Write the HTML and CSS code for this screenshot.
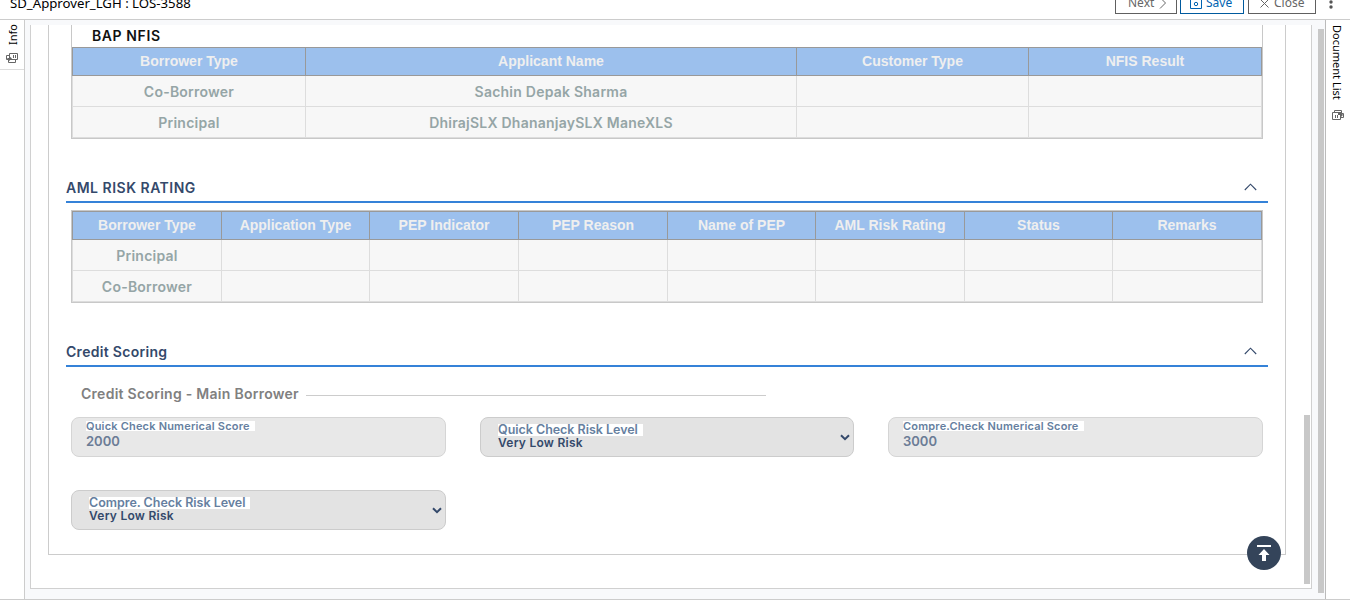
FILE: index.html
```html
<!DOCTYPE html>
<html lang="en">
<head>
<meta charset="utf-8">
<title>SD_Approver_LGH : LOS-3588</title>
<link rel="stylesheet" href="styles.css">
</head>
<body>
<header class="topbar">
  <h1 class="title">SD_Approver_LGH : LOS-3588</h1>
  <div class="actions">
    <button class="btn next">Next<svg width="8" height="12" viewBox="0 0 8 12"><path d="M1 .5 6.500 6 1 11.500"/></svg></button>
    <button class="btn save"><svg width="12" height="12" viewBox="0 0 12 12"><path d="M.5.5h11v11H.5zM3.500 0v2.500h5V0"/><circle cx="6" cy="7" r="1.700"/></svg>Save</button>
    <button class="btn close"><svg width="9" height="9" viewBox="0 0 9 9"><path d="M.5.5l8 8M8.500.5l-8 8"/></svg>Close</button>
    <svg class="dots" width="4" height="14" viewBox="0 0 4 14"><circle cx="2" cy="2" r="1.700"/><circle cx="2" cy="7" r="1.700"/><circle cx="2" cy="12" r="1.700"/></svg>
  </div>
</header>
<div class="workspace">
  <aside class="rail left">
    <div class="tab">
      <span class="vtext up">Info</span>
      <svg class="docs" width="12" height="10" viewBox="0 0 12 10"><path d="M3.500.5h8v6h-8zM3 2.500H.5v4H2M2.500 7v2.500h7V7M7.500 2v3M9.500 2v3"/><path class="fill" d="M1 5h2V3l3 2.500L3 8z"/></svg>
    </div>
  </aside>
  <main class="stage">
    <div class="frame">
      <div class="panel">
        <div class="bap">
          <h2 class="bap-title">BAP NFIS</h2>
          <div class="grid nfis">
            <div class="th"><span>Borrower Type</span></div><div class="th"><span>Applicant Name</span></div><div class="th"><span>Customer Type</span></div><div class="th"><span>NFIS Result</span></div>
            <div class="td"><span>Co-Borrower</span></div><div class="td"><span>Sachin Depak Sharma</span></div><div class="td"></div><div class="td"></div>
            <div class="td"><span>Principal</span></div><div class="td"><span>DhirajSLX DhananjaySLX ManeXLS</span></div><div class="td"></div><div class="td"></div>
          </div>
        </div>
        <div class="section aml-head"><h3 class="caps">AML RISK RATING</h3><svg width="13" height="8" viewBox="0 0 13 8"><path d="M.8 7 6.500 1.200 12.200 7"/></svg></div>
        <div class="box">
          <div class="grid aml">
            <div class="th"><span>Borrower Type</span></div><div class="th"><span>Application Type</span></div><div class="th"><span>PEP Indicator</span></div><div class="th"><span>PEP Reason</span></div><div class="th"><span>Name of PEP</span></div><div class="th"><span>AML Risk Rating</span></div><div class="th"><span>Status</span></div><div class="th"><span>Remarks</span></div>
            <div class="td"><span>Principal</span></div><div class="td"></div><div class="td"></div><div class="td"></div><div class="td"></div><div class="td"></div><div class="td"></div><div class="td"></div>
            <div class="td"><span>Co-Borrower</span></div><div class="td"></div><div class="td"></div><div class="td"></div><div class="td"></div><div class="td"></div><div class="td"></div><div class="td"></div>
          </div>
        </div>
        <div class="section credit-head"><h3>Credit Scoring</h3><svg width="13" height="8" viewBox="0 0 13 8"><path d="M.8 7 6.500 1.200 12.200 7"/></svg></div>
        <div class="legend"><h4>Credit Scoring - Main Borrower</h4></div>
        <div class="fields">
          <div class="field input"><label>Quick Check Numerical Score</label><span class="value">2000</span></div>
          <div class="field select"><label>Quick Check Risk Level</label><span class="value">Very Low Risk</span><svg width="10" height="7" viewBox="0 0 10 7"><path d="M1 1.200 5 5.200 9 1.200"/></svg></div>
          <div class="field input"><label>Compre.Check Numerical Score</label><span class="value">3000</span></div>
          <div class="field select"><label>Compre. Check Risk Level</label><span class="value">Very Low Risk</span><svg width="10" height="7" viewBox="0 0 10 7"><path d="M1 1.200 5 5.200 9 1.200"/></svg></div>
        </div>
        <button class="to-top" aria-label="Back to top"><svg width="14" height="16" viewBox="0 0 14 16"><path d="M0 0h14v2H0zM7 4l5.500 6H9v6H5v-6H1.500z"/></svg></button>
      </div>
      <div class="thumb inner"></div>
    </div>
    <div class="thumb outer"></div>
  </main>
  <aside class="rail right">
    <span class="vtext">Document List</span>
    <svg class="docs" width="12" height="10" viewBox="0 0 12 10"><path d="M.5 2.500h8v7h-8zM2.500 2V.5h7V3M9.500 3.500h2v4H9M3.500 5v3M5.500 5v3"/><path class="fill" d="M6 2h3l2 3-2 2V5H6z"/></svg>
  </aside>
</div>
</body>
</html>
```
FILE: styles.css
```css
* { box-sizing: border-box; }
body { margin: 0; height: 615px; overflow: hidden; background: #fff; font-family: Inter, sans-serif; }
h1, h2, h3, h4 { margin: 0; }
button { margin: 0; font: inherit; }
svg { display: block; flex: none; fill: none; }

.topbar { height: 20px; border-bottom: 1px solid #ccc; overflow: hidden; display: flex; justify-content: space-between; align-items: flex-end; padding: 0 16px 5px 10px; }
.title { font: 400 13.2px/20px "Noto Sans", sans-serif; color: #000; margin-bottom: 1px; white-space: nowrap; }
.actions { display: flex; align-items: flex-end; }
.btn { height: 24px; border: 1px solid #606060; background: #fff; color: #666; font: 400 12px/20px "Noto Sans", sans-serif; display: flex; align-items: center; padding: 2px 0 0; }
.btn svg { stroke: currentColor; }
.next { width: 62px; padding-left: 12px; gap: 5px; margin-right: 3px; }
.save { width: 64px; padding-left: 9px; gap: 4px; margin-right: 4px; color: #0063b1; border-color: #005a9e; }
.close { width: 68px; padding-left: 11px; gap: 5px; }
.dots { fill: #555; margin: 0 1px 5px 13px; }

.workspace { display: flex; height: 580px; border-bottom: 1px solid #ccc; }
.rail { width: 25px; flex: none; background: #fff; }
.left { border-right: 1px solid #ccc; }
.right { border-left: 1px solid #bbb; display: flex; flex-direction: column; align-items: flex-start; padding: 5px 0 0 2px; }
.tab { height: 50px; border-bottom: 1px solid #ddd; display: flex; flex-direction: column; padding: 5px 0 0 4px; }
.vtext { writing-mode: vertical-rl; font: 400 11px/18px "Noto Sans", sans-serif; color: #000; white-space: nowrap; }
.up { transform: rotate(180deg); height: 20px; width: 18px; }
.docs { stroke: #666; margin: 8px 0 0 2px; }
.docs .fill { fill: #666; stroke: none; }
.right .docs { margin: 10px 0 0 4px; }

.stage { flex: 1; min-width: 0; background: #f8f9fb; display: flex; padding: 5px 1px 0 5px; }
.frame { width: 1282px; height: 564px; border: 1px solid #d0d0d0; border-top: 0; background: #fff; display: flex; padding-left: 17px; }
.thumb { width: 6px; background: #c8c8c8; flex: none; }
.inner { margin: 390px 0 0 18px; height: 169px; width: 6px; }
.outer { margin: 4px 0 0 6px; height: 564px; width: 6px; }
.panel { position: relative; width: 1238px; height: 530px; border: 1px solid #ccc; border-top: 0; padding: 0 17px; flex: none; }

.bap, .box { width: 1192px; margin-left: 5px; border: 1px solid #c8c8c8; }
.bap { border-top: 0; }
.bap-title { height: 22px; padding-left: 20px; font-size: 14px; line-height: 22px; font-weight: 600; letter-spacing: .6px; color: #111; }
.grid { display: grid; grid-template-rows: 29px 31px 31px; text-align: center; }
.nfis { grid-template-columns: 234px 491px 232px 233px; }
.aml { grid-template-columns: 150px 148px 149px 149px 148px 149px 148px 149px; }
.th, .td { display: flex; justify-content: center; align-items: center; white-space: nowrap; }
.th { background: #9cc0ed; border: solid #999; border-width: 1px 1px 1px 0; color: #efefef; font: 700 14px/16px "Liberation Sans", sans-serif; padding-bottom: 1px; }
.td { background: #f7f7f7; border: solid #ddd; border-width: 0 1px 1px 0; color: #95a5a6; font-size: 14px; font-weight: 600; line-height: 18px; letter-spacing: .23px; padding-top: 2px; }
.nfis > :nth-child(4n+1), .aml > :nth-child(8n+1) { border-left-width: 1px; }

.section { height: 30px; width: 1202px; border-bottom: 2px solid #3582d8; display: flex; justify-content: space-between; align-items: center; padding: 1px 11px 0 0; }
.section h3 { font-size: 14px; font-weight: 600; line-height: 20px; letter-spacing: .3px; color: #34496b; }
.section .caps { letter-spacing: .5px; }
.section svg { stroke: #34496b; stroke-width: 1.1; margin-bottom: 1px; }
.aml-head { margin: 34px 0 7px; }
.credit-head { margin-top: 34px; }
.legend { width: 700px; height: 20px; margin-top: 17px; padding-left: 15px; display: flex; align-items: center; gap: 7px; }
.legend h4 { font-size: 14px; line-height: 20px; font-weight: 600; letter-spacing: .27px; color: #808080; white-space: nowrap; }
.legend::after { content: ""; flex: 1; height: 1px; background: #ccc; margin-top: 3px; }

.fields { display: grid; grid-template-columns: 375px 374px 375px; grid-auto-rows: 40px; column-gap: 34px; row-gap: 33px; margin: 13px 0 0 5px; }
.field { border: 1px solid #d5d5d5; border-radius: 8px; background: #e8e8e8; position: relative; display: flex; flex-direction: column; align-items: flex-start; padding: 3px 0 0 14px; }
.field label { background: #fff; color: #667f9f; font-size: 11px; font-weight: 600; line-height: 10px; letter-spacing: .19px; padding-right: 5px; height: 10px; white-space: nowrap; }
.field .value { color: #6b7c96; font-size: 13px; font-weight: 600; line-height: 16px; margin-top: 2px; white-space: nowrap; }
.select { background: #e3e3e3; border-color: #ccc; padding: 6px 0 0 17px; }
.select label { font-size: 12.5px; height: 12px; line-height: 12px; letter-spacing: -.03px; }
.select .value { color: #34496b; font-size: 12px; line-height: 14px; letter-spacing: .25px; margin-top: 0; }
.select svg { position: absolute; right: 3px; top: 16px; stroke: #34496b; stroke-width: 2; }
.to-top { position: absolute; right: 4px; bottom: -16px; width: 34px; height: 34px; border: 0; border-radius: 50%; background: #34445a; display: flex; align-items: center; justify-content: center; padding: 0; }
.to-top svg { fill: #fff; }
```
